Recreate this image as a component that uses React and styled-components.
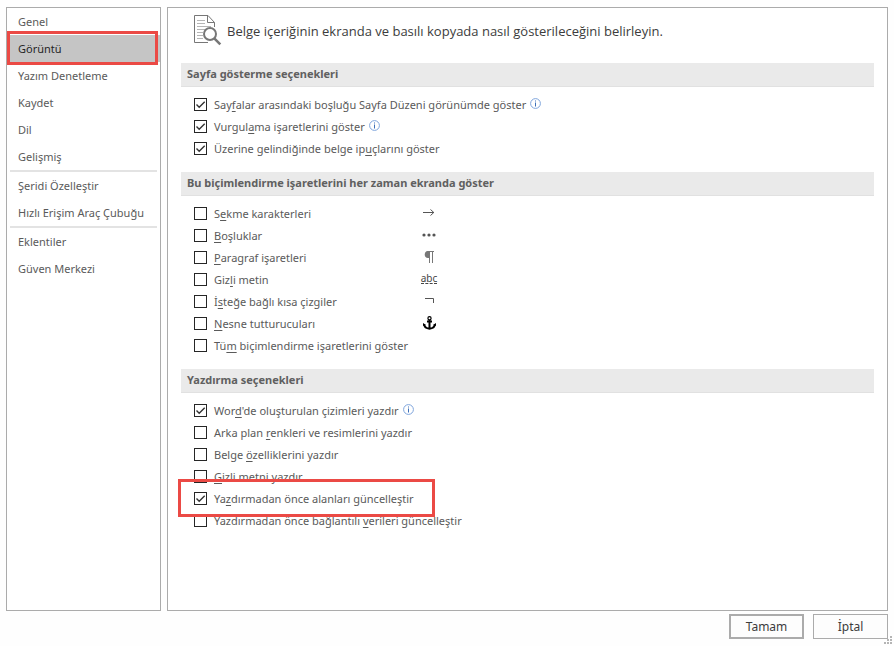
import React from "react";
import styled, { createGlobalStyle, css } from "styled-components";

const GlobalStyle = createGlobalStyle`
  *, *::before, *::after { box-sizing: border-box; }
  body {
    margin: 0;
    background: #fefefe;
    color: #5a5a5a;
    font: 11px/16px "Noto Sans", "Open Sans", sans-serif;
  }
`;

const Dialog = styled.div`
  display: flex;
  flex-direction: column;
  min-height: 100vh;
  padding: 7px 6px;
`;

const Columns = styled.div`
  display: grid;
  grid-template-columns: 155px 1fr;
  gap: 6px;
  flex: 1;
`;

const Sidebar = styled.nav`
  border: 1px solid #ababab;
  background: #fff;
  padding-left: 3px;
`;

const NavButton = styled.button`
  position: relative;
  display: block;
  width: 100%;
  height: 27px;
  padding: 0 8px;
  border: 0;
  background: ${(p) => (p.$active ? "#c5c5c5" : "transparent")};
  color: ${(p) => (p.$active ? "#262626" : "#5a5a5a")};
  font: inherit;
  text-align: left;
  white-space: nowrap;
`;

const Separator = styled.hr`
  height: 2px;
  margin: 0 3px 0 0;
  border: 0;
  background: #e3e3e3;
`;

const highlight = css`
  position: absolute;
  z-index: 1;
  border: 3px solid #eb4a45;
  pointer-events: none;
`;

const NavHighlight = styled.span`
  ${highlight}
  inset: -4px 2px -3px -3px;
`;

const OptionHighlight = styled.span`
  ${highlight}
  inset: -12px -21px -10px -16px;
`;

const Panel = styled.main`
  border: 1px solid #ababab;
  background: #fff;
  padding: 0 13px;
`;

const Intro = styled.header`
  display: flex;
  align-items: center;
  gap: 5px;
  height: 55px;
  padding: 0 13px 10px;
`;

const IntroText = styled.h1`
  margin: 0;
  color: #3c3c3c;
  font-family: "Open Sans", "Noto Sans", sans-serif;
  font-size: 13px;
  font-weight: 400;
  line-height: 18px;
`;

const Section = styled.section`
  margin-bottom: 13px;
`;

const SectionTitle = styled.h2`
  height: 24px;
  margin: 0 0 6px;
  padding: 0 6px;
  border-bottom: 1px solid #e1e1e1;
  background: #eaeaea;
  color: #606060;
  font-size: 11px;
  font-weight: 700;
  line-height: 22px;
`;

const OptionRow = styled.div`
  display: grid;
  grid-template-columns: ${(p) => (p.$marks ? "224px 22px" : "1fr")};
  align-items: center;
  height: 22px;
  padding: 1px 0 0 13px;
`;

const OptionLabel = styled.label`
  position: relative;
  display: flex;
  align-items: center;
  justify-self: start;
  white-space: nowrap;
`;

const Checkbox = styled.input`
  appearance: none;
  flex: none;
  width: 13px;
  height: 13px;
  margin: 0 7px 0 0;
  border: 1px solid #262626;
  background: #fff;
  &:checked {
    background: #fff
      url("data:image/svg+xml,%3Csvg xmlns='http://www.w3.org/2000/svg' viewBox='0 0 11 11'%3E%3Cpath d='M1.5 5.5 4.2 8.2 9.7 2.7' fill='none' stroke='%23333' stroke-width='1.4'/%3E%3C/svg%3E");
  }
`;

const AccessKey = styled.u`
  text-decoration: underline;
  text-decoration-thickness: 1px;
  text-underline-offset: 2px;
  text-decoration-skip-ink: none;
`;

const InfoSvg = styled.svg`
  flex: none;
  margin: -2px 0 0 4px;
`;

const Mark = styled.span`
  display: flex;
  justify-content: center;
  margin-top: -2px;
  color: #555;
`;

const HiddenMark = styled.span`
  border-bottom: 1px dashed #444;
  color: #444;
  font-size: 10px;
  line-height: 10px;
`;

const Footer = styled.footer`
  display: flex;
  justify-content: flex-end;
  gap: 9px;
  padding-top: 3px;
`;

const DialogButton = styled.button`
  width: 75px;
  height: 25px;
  padding: 0;
  border: ${(p) => (p.$primary ? 2 : 1)}px solid #ababab;
  background: #fdfdfd;
  color: #3c3c3c;
  font: inherit;
  font-size: 12px;
`;

const Grip = styled.svg`
  position: fixed;
  right: 2px;
  bottom: 2px;
`;

function InfoIcon() {
  return (
    <InfoSvg width="11" height="11" viewBox="0 0 11 11" aria-hidden="true">
      <circle cx="5.5" cy="5.5" r="4.9" fill="#fff" stroke="#7fa5dc" />
      <path d="M5.5 2.5v1M5.5 4.5v4" stroke="#3c6fb8" />
    </InfoSvg>
  );
}

function PageIcon() {
  return (
    <svg width="28" height="32" viewBox="0 0 28 32" fill="none" aria-hidden="true">
      <path d="M20.5 12V7.5L14 .5H.5v27H14" stroke="#777" />
      <path d="M13.5 .5v7h7" stroke="#777" />
      <path d="M3 5.5h8M3 8.5h8M3 11.5h14M3 14.5h8M3 17.5h6M3 20.5h6M3 23.5h6" stroke="#b5b5b5" />
      <circle cx="16" cy="19" r="6" fill="#fff" stroke="#777" strokeWidth="2" />
      <path d="m20.3 23.3 6 6" stroke="#777" strokeWidth="2.6" />
    </svg>
  );
}

const marks = {
  tab: (
    <svg width="12" height="9" viewBox="0 0 12 9" fill="none" stroke="currentColor">
      <path d="M0 4.5h11M7.5 1.5l3.3 3-3.3 3" />
    </svg>
  ),
  space: (
    <svg width="14" height="4" viewBox="0 0 14 4" fill="currentColor">
      <circle cx="2" cy="2" r="1.6" />
      <circle cx="7" cy="2" r="1.6" />
      <circle cx="12" cy="2" r="1.6" />
    </svg>
  ),
  paragraph: (
    <svg width="10" height="12" viewBox="0 0 10 12">
      <path d="M4.5 0H10v1H9v11H8V1H6v11H5V7H4a3.5 3.5 0 0 1 .5-7z" fill="#777" />
    </svg>
  ),
  hidden: <HiddenMark>abc</HiddenMark>,
  hyphen: (
    <svg width="9" height="6" viewBox="0 0 9 6" fill="none" stroke="currentColor">
      <path d="M0 .5h8.5V5" />
    </svg>
  ),
  anchor: (
    <svg width="13" height="14" viewBox="0 0 13 14" fill="none" stroke="#000">
      <circle cx="6.5" cy="2.2" r="1.6" strokeWidth="1.2" />
      <path d="M6.5 4v8.5M4 5.5h5M1.2 8.5c.3 2.5 2.2 4 5.3 4.2 3.1-.2 5-1.7 5.3-4.2" strokeWidth="2" />
      <path d="M0 10V7l3 2zM13 10V7l-3 2z" fill="#000" stroke="none" />
    </svg>
  ),
};

const navGroups = [
  ["Genel", "Görüntü", "Yazım Denetleme", "Kaydet", "Dil", "Gelişmiş"],
  ["Şeridi Özelleştir", "Hızlı Erişim Araç Çubuğu"],
  ["Eklentiler", "Güven Merkezi"],
];

const sections = [
  {
    title: "Sayfa gösterme seçenekleri",
    options: [
      { text: ["Say", "f", "alar arasındaki boşluğu Sayfa Düzeni görünümde göster"], checked: true, info: true },
      { text: ["Vurgul", "a", "ma işaretlerini göster"], checked: true, info: true },
      { text: ["Üzerine gelindiğinde belge ip", "u", "çlarını göster"], checked: true },
    ],
  },
  {
    title: "Bu biçimlendirme işaretlerini her zaman ekranda göster",
    options: [
      { text: ["S", "e", "kme karakterleri"], mark: "tab" },
      { text: ["", "B", "oşluklar"], mark: "space" },
      { text: ["", "P", "aragraf işaretleri"], mark: "paragraph" },
      { text: ["Giz", "l", "i metin"], mark: "hidden" },
      { text: ["İ", "s", "teğe bağlı kısa çizgiler"], mark: "hyphen" },
      { text: ["", "N", "esne tutturucuları"], mark: "anchor" },
      { text: ["Tü", "m", " biçimlendirme işaretlerini göster"] },
    ],
  },
  {
    title: "Yazdırma seçenekleri",
    options: [
      { text: ["Wor", "d", "'de oluşturulan çizimleri yazdır"], checked: true, info: true },
      { text: ["Arka plan ", "r", "enkleri ve resimlerini yazdır"] },
      { text: ["Belge ", "ö", "zelliklerini yazdır"] },
      { text: ["", "G", "izli metni yazdır"] },
      { text: ["Ya", "z", "dırmadan önce alanları güncelleştir"], checked: true, highlighted: true },
      { text: ["Yazdırmadan önce bağlantılı ", "v", "erileri güncelleştir"] },
    ],
  },
];

function Option({ text, checked, info, mark, highlighted }) {
  const [before, key, after] = text;
  return (
    <OptionRow $marks={Boolean(mark)}>
      <OptionLabel>
        <Checkbox type="checkbox" defaultChecked={checked} />
        <span>
          {before}
          <AccessKey>{key}</AccessKey>
          {after}
        </span>
        {info && <InfoIcon />}
        {highlighted && <OptionHighlight />}
      </OptionLabel>
      {mark && <Mark>{marks[mark]}</Mark>}
    </OptionRow>
  );
}

export default function App() {
  return (
    <>
      <GlobalStyle />
      <Dialog>
        <Columns>
          <Sidebar>
            {navGroups.map((group, i) => (
              <React.Fragment key={group[0]}>
                {i > 0 && <Separator />}
                {group.map((name) => (
                  <NavButton key={name} type="button" $active={name === "Görüntü"}>
                    {name}
                    {name === "Görüntü" && <NavHighlight />}
                  </NavButton>
                ))}
              </React.Fragment>
            ))}
          </Sidebar>
          <Panel>
            <Intro>
              <PageIcon />
              <IntroText>Belge içeriğinin ekranda ve basılı kopyada nasıl gösterileceğini belirleyin.</IntroText>
            </Intro>
            {sections.map((section) => (
              <Section key={section.title}>
                <SectionTitle>{section.title}</SectionTitle>
                {section.options.map((option) => (
                  <Option key={option.text.join("")} {...option} />
                ))}
              </Section>
            ))}
          </Panel>
        </Columns>
        <Footer>
          <DialogButton type="button" $primary>Tamam</DialogButton>
          <DialogButton type="button">İptal</DialogButton>
        </Footer>
        <Grip width="8" height="8" viewBox="0 0 8 8" fill="#b5b5b5" aria-hidden="true">
          <path d="M6 0h2v2H6zM3 3h2v2H3zM6 3h2v2H6zM0 6h2v2H0zM3 6h2v2H3zM6 6h2v2H6z" />
        </Grip>
      </Dialog>
    </>
  );
}
